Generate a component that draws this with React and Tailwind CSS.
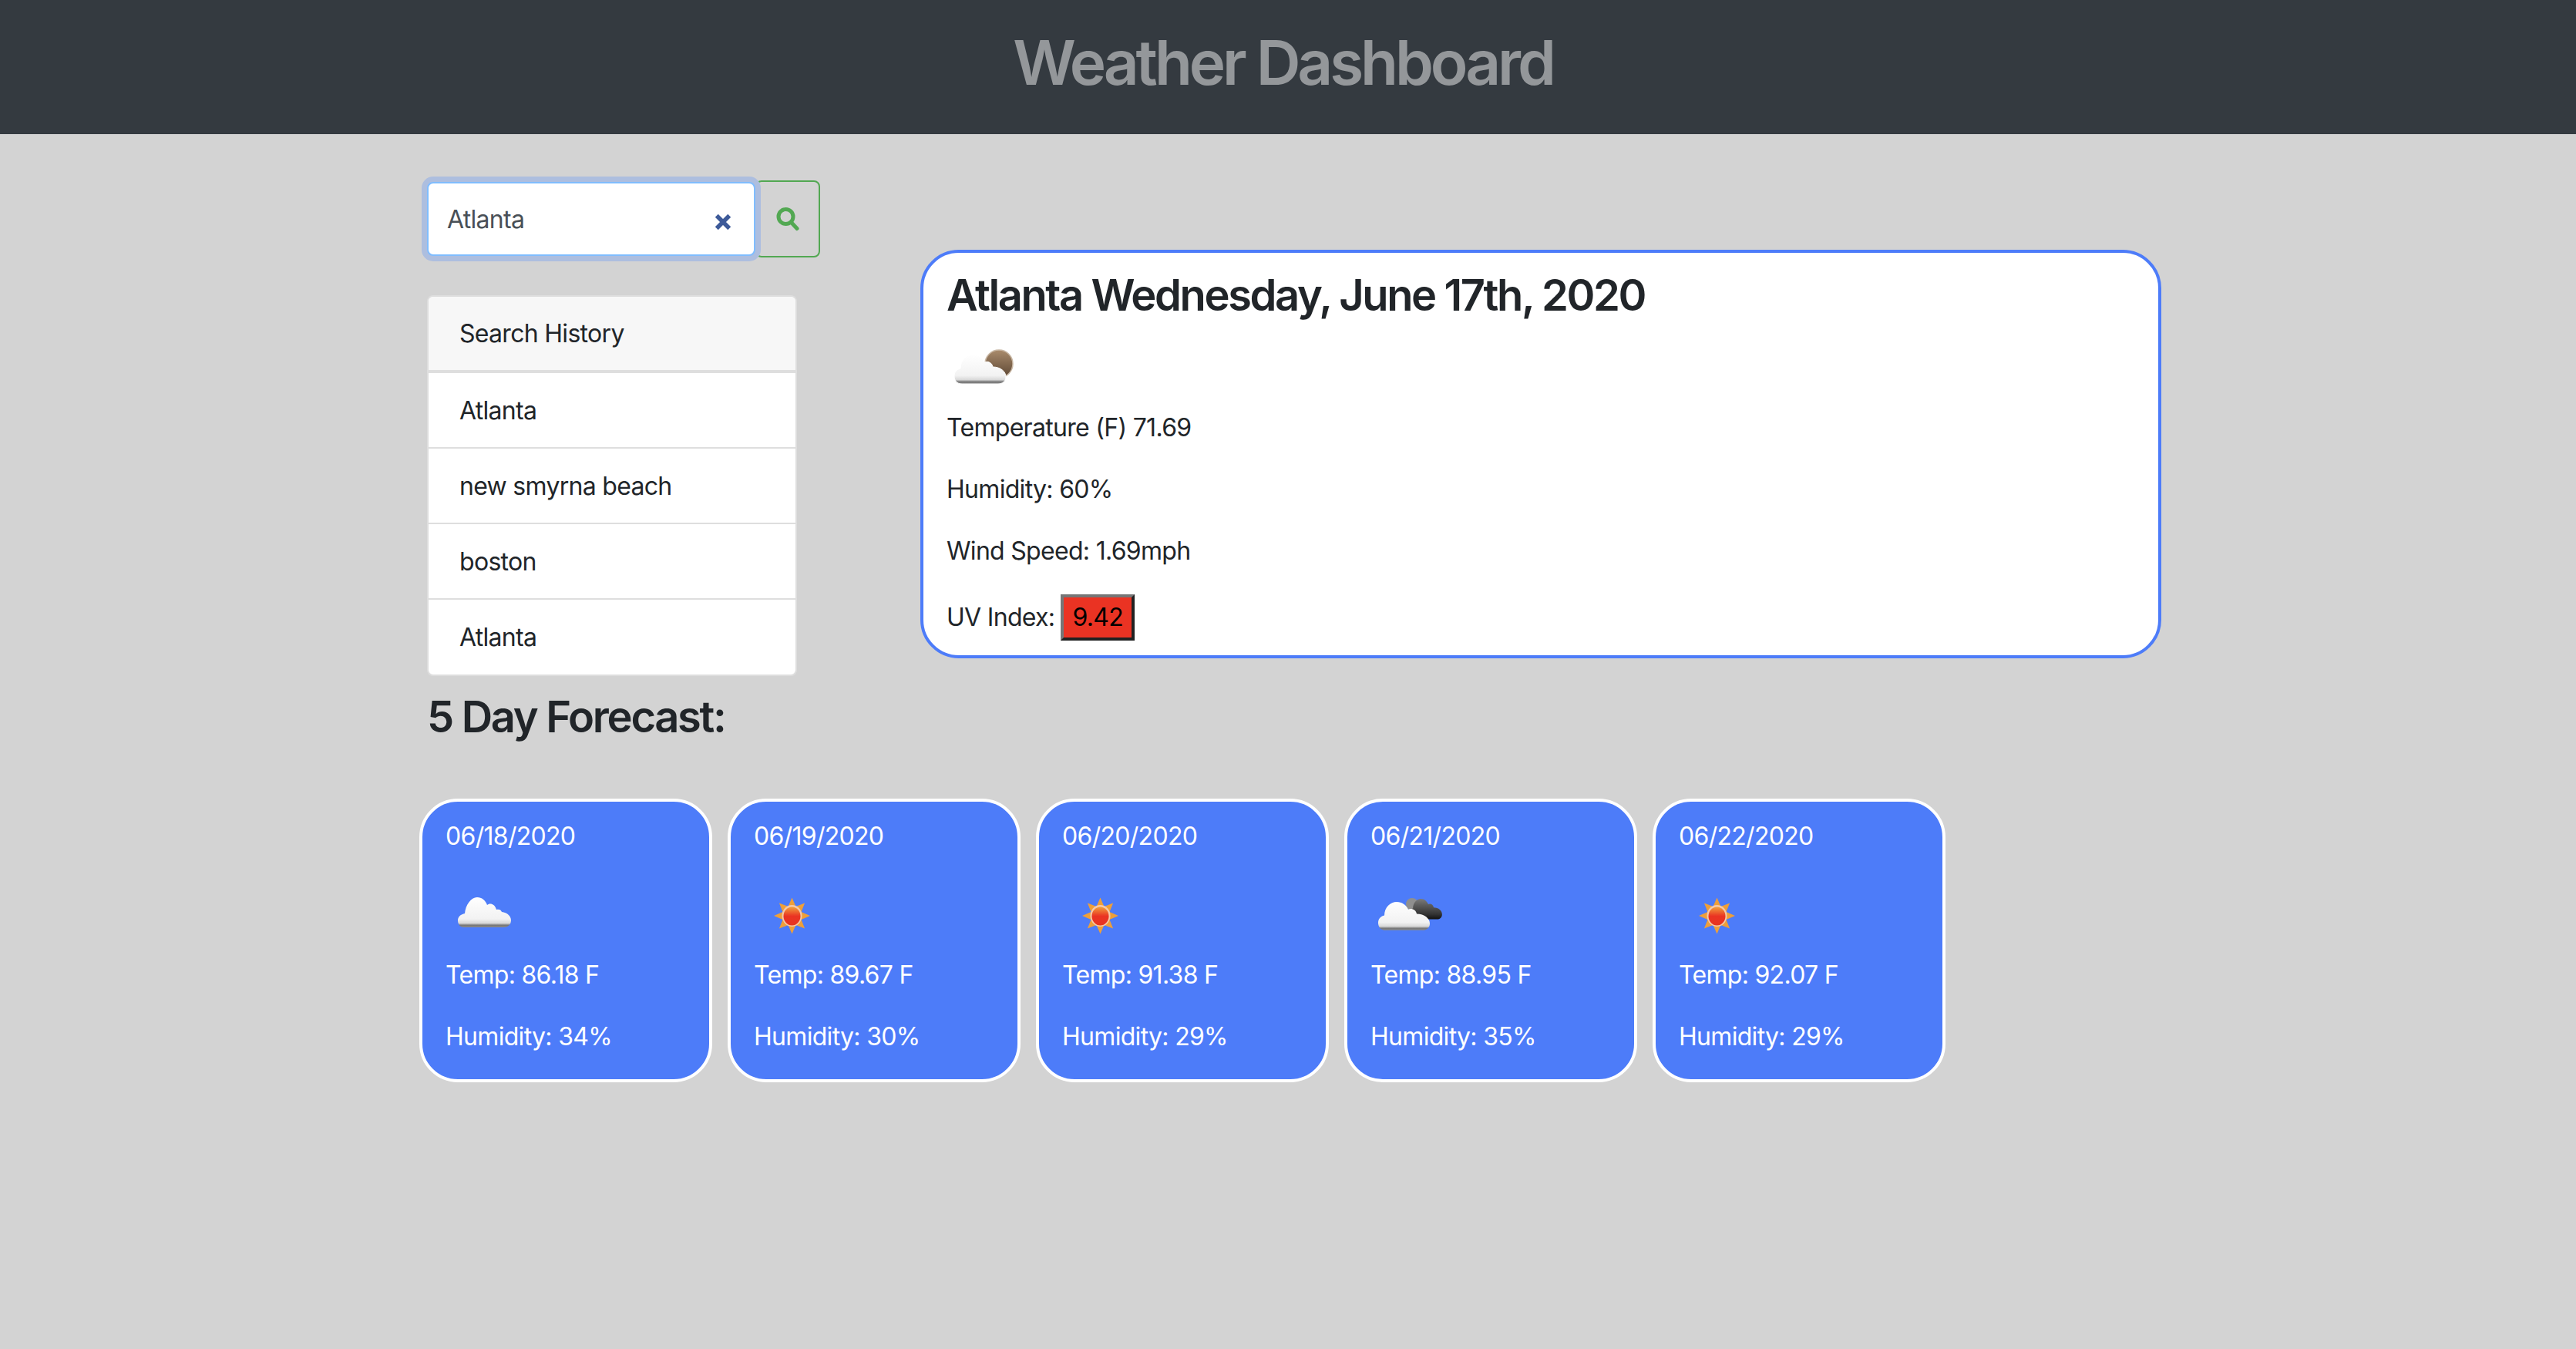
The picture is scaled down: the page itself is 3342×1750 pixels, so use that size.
import React from 'react';

const FONT = { fontFamily: 'Inter, "Noto Sans", sans-serif' };

const CLOUD =
  'M20 71C13 71 10 66 10 61C10 55 14 52 18 51C18 40 26 33 34 33C41 33 46 37 49 43C53 41 59 43 60 49C70 49 77 55 77 62C77 68 72 71 67 71Z';

// overcast icon has a taller, narrower left bump
const TALL_CLOUD =
  'M24 69C18 69 16 64 16 60C16 55 20 52 25 51C26 40 33 30 41 30C47 30 52 34 54 40C57 37 64 38 66 46C69 45 72 46 73 49C80 50 85 54 85 60C85 66 80 69 76 69Z';

const sunPoints = Array.from({ length: 16 }, (_, i) => {
  const r = i % 2 === 0 ? 23.5 : 13;
  const a = (i * Math.PI) / 8 - Math.PI / 2;
  return `${49.5 + r * Math.cos(a)},${54 + r * Math.sin(a)}`;
}).join(' ');

const Gradients = ({ id }) => (
  <defs>
    <linearGradient id={`${id}-cloud`} x1="0" y1="0" x2="0" y2="1">
      <stop offset="0" stopColor="#ffffff" />
      <stop offset="0.72" stopColor="#f2f2f2" />
      <stop offset="0.86" stopColor="#d8d8d8" />
      <stop offset="0.93" stopColor="#777777" />
      <stop offset="1" stopColor="#8a8a8a" />
    </linearGradient>
    <linearGradient id={`${id}-sun`} x1="0" y1="0" x2="0" y2="1">
      <stop offset="0" stopColor="#f0a13c" />
      <stop offset="0.5" stopColor="#ea3323" />
      <stop offset="1" stopColor="#e8351f" />
    </linearGradient>
    <linearGradient id={`${id}-brown`} x1="0" y1="0" x2="0" y2="1">
      <stop offset="0" stopColor="#a98b6c" />
      <stop offset="1" stopColor="#5c4633" />
    </linearGradient>
    <linearGradient id={`${id}-dark`} x1="0" y1="0" x2="0" y2="1">
      <stop offset="0" stopColor="#7a7a7a" />
      <stop offset="0.75" stopColor="#333333" />
      <stop offset="1" stopColor="#111111" />
    </linearGradient>
  </defs>
);

const WeatherIcon = ({ type, id }) => (
  <svg viewBox="0 0 100 100" className="h-[100px] w-[100px] blur-[0.6px]">
    <Gradients id={id} />
    {type === 'sun' && (
      <>
        <polygon points={sunPoints} fill="#ee9f3a" />
        <ellipse cx="49.5" cy="54" rx="13" ry="14" fill="#f6c9a8" />
        <ellipse cx="49.5" cy="54.5" rx="11" ry="12" fill={`url(#${id}-sun)`} />
      </>
    )}
    {type === 'partly' && (
      <>
        <circle cx="68" cy="45" r="18" fill={`url(#${id}-brown)`} stroke="#c9b8a5" strokeWidth="1.5" />
        <path d={CLOUD} fill={`url(#${id}-cloud)`} stroke="#ffffff" strokeWidth="1" />
      </>
    )}
    {type === 'cloud' && <path d={TALL_CLOUD} fill={`url(#${id}-cloud)`} />}
    {type === 'dark' && (
      <>
        <circle cx="54" cy="39" r="8" fill="#8f8f8f" />
        <path
          d={CLOUD}
          fill={`url(#${id}-dark)`}
          transform="translate(50 32) scale(0.64 0.7) translate(-10 -33)"
        />
        <path
          d={CLOUD}
          fill={`url(#${id}-cloud)`}
          transform="translate(10 36) scale(1 0.97) translate(-10 -33)"
        />
      </>
    )}
  </svg>
);

const history = ['Atlanta', 'new smyrna beach', 'boston', 'Atlanta'];

const forecast = [
  { date: '06/18/2020', icon: 'cloud', temp: '86.18', humidity: '34' },
  { date: '06/19/2020', icon: 'sun', temp: '89.67', humidity: '30' },
  { date: '06/20/2020', icon: 'sun', temp: '91.38', humidity: '29' },
  { date: '06/21/2020', icon: 'dark', temp: '88.95', humidity: '35' },
  { date: '06/22/2020', icon: 'sun', temp: '92.07', humidity: '29' },
];

const App = () => {
  return (
    <div
      className="min-h-[1750px] bg-[#d3d3d3] text-[32px] leading-[48px] tracking-[-0.7px] text-[#212529]"
      style={FONT}
    >
      {/* Header */}
      <header className="flex h-[174px] items-start justify-center bg-[#343a40] pt-[33px] pr-[13px]">
        <h1 className="text-[80px] leading-[96px] font-[560] tracking-[-4.1px] text-[#94979a]">
          Weather Dashboard
        </h1>
      </header>

      <main className="pl-[554px]">
        <div className="flex">
          {/* Search + history */}
          <div className="w-[640px] shrink-0 pt-[60px]">
            <div className="flex h-[100px] items-center">
              <div className="relative h-[96px] w-[426px] rounded-[8px] border-2 border-[#80bdff] bg-white shadow-[0_0_0_7px_#adbedf]">
                <input
                  readOnly
                  value="Atlanta"
                  className="h-full w-full bg-transparent pl-[24px] text-[32px] tracking-[-0.7px] text-[#495057] outline-none"
                />
                <svg
                  viewBox="0 0 20 20"
                  className="absolute top-[39px] right-[29px] h-[22px] w-[22px] text-[#3d5a99]"
                >
                  <path d="M2.5 2.5L17.5 17.5M17.5 2.5L2.5 17.5" stroke="currentColor" strokeWidth="5" />
                </svg>
              </div>
              <button className="flex h-[100px] w-[84px] items-center justify-center rounded-[8px] border-2 border-[#52a852]">
                <svg viewBox="0 0 30 32" className="h-[32px] w-[30px]" fill="none">
                  <circle cx="12.5" cy="13" r="9.5" stroke="#52a852" strokeWidth="5" />
                  <path d="M19.5 20.5L27 28.5" stroke="#52a852" strokeWidth="5" strokeLinecap="round" />
                </svg>
              </button>
            </div>

            <ul className="mt-[49px] w-[480px] overflow-hidden rounded-[8px] border-2 border-[#dedede] bg-white">
              <li className="h-[99px] border-b-[4px] border-[#dedede] bg-[#f7f7f7] pt-[24px] pl-[40px]">
                Search History
              </li>
              {history.map((city, i) => (
                <li
                  key={i}
                  className="h-[98px] border-b-2 border-[#dedede] pt-[25px] pl-[40px] last:h-[97px] last:border-b-0"
                >
                  {city}
                </li>
              ))}
            </ul>
          </div>

          {/* Current weather */}
          <section className="mt-[150px] h-[530px] w-[1610px] rounded-[50px] border-[4px] border-[#4d7cf9] bg-white px-[30px] pt-[22px]">
            <h3 className="text-[56px] leading-[67px] font-[560] tracking-[-2.4px]">
              Atlanta Wednesday, June 17th, 2020
            </h3>
            <div className="mt-[10px] mb-[4px]">
              <WeatherIcon type="partly" id="current" />
            </div>
            <p className="mb-[32px]">Temperature (F) 71.69</p>
            <p className="mb-[32px]">Humidity: 60%</p>
            <p className="mb-[32px]">Wind Speed: 1.69mph</p>
            <p className="flex items-center">
              UV Index:
              <span className="ml-[8px] flex h-[60px] w-[96px] items-center justify-center border-[4px] border-t-[#767676] border-r-[#212121] border-b-[#212121] border-l-[#767676] bg-[#ea3323] text-black">
                9.42
              </span>
            </p>
          </section>
        </div>

        {/* Forecast */}
        <h3 className="mt-[20px] mb-[72px] text-[56px] leading-[67px] font-[560] tracking-[-2.3px]">
          5 Day Forecast:
        </h3>
        <div className="-ml-[10px] flex gap-[20px]">
          {forecast.map((day, i) => (
            <div
              key={day.date}
              className="h-[368px] w-[380px] rounded-[50px] border-[4px] border-white bg-[#4d7cf9] px-[30px] pt-[21px] text-white"
            >
              <p className="mb-[25px]">{day.date}</p>
              <div className="mb-[7px]">
                <WeatherIcon type={day.icon} id={`day-${i}`} />
              </div>
              <p className="mb-[32px]">Temp: {day.temp} F</p>
              <p>Humidity: {day.humidity}%</p>
            </div>
          ))}
        </div>
      </main>
    </div>
  );
};

export default App;
